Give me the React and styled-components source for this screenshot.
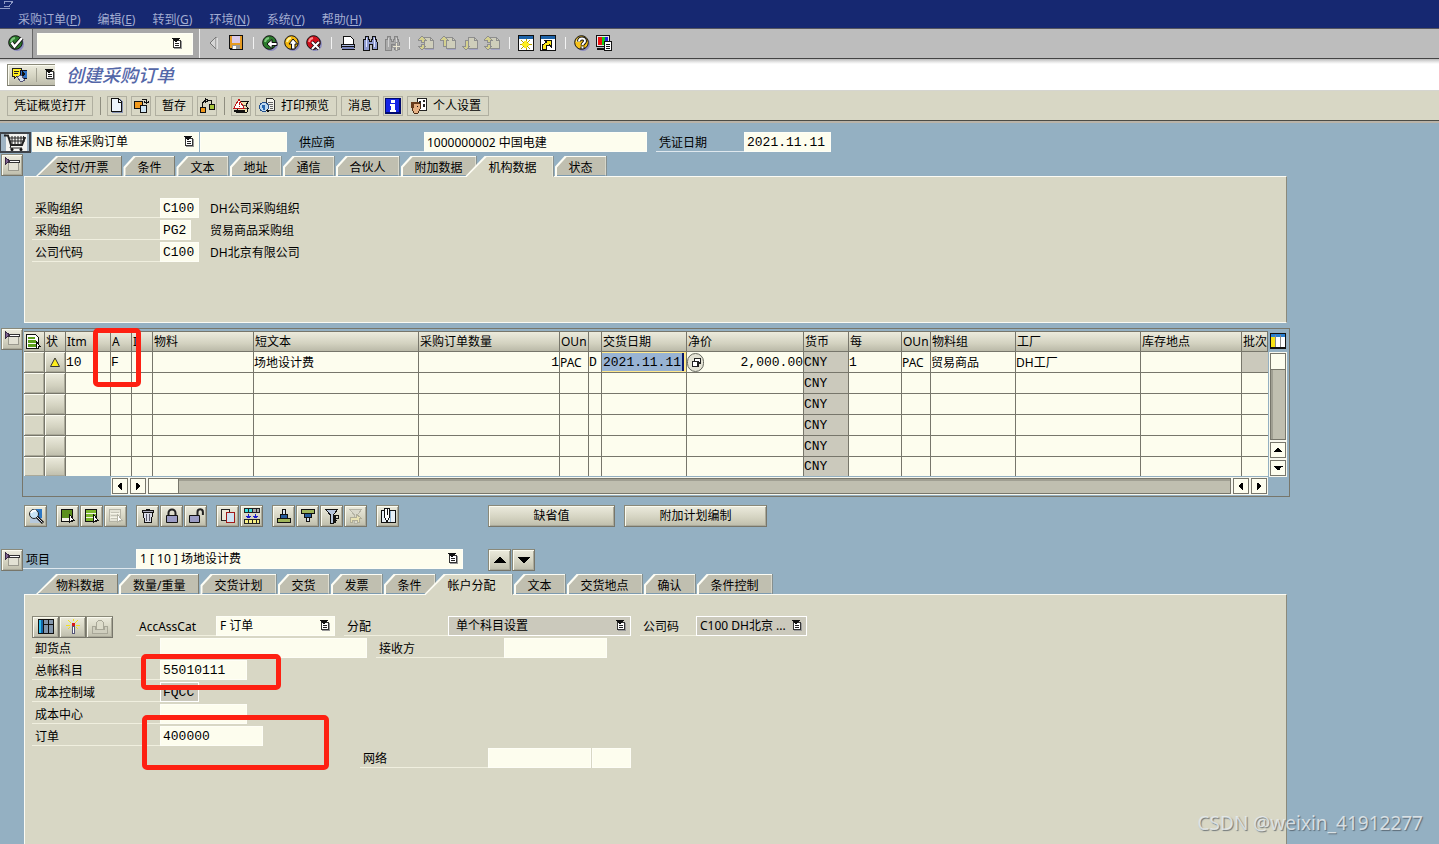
import React, { useState } from "react";
import styled, { createGlobalStyle, css } from "styled-components";

const sans = '"Noto Sans", "Noto Sans CJK SC", sans-serif';
const mono = '"Liberation Mono", "Noto Sans CJK SC", monospace';

const colors = {
  navy: "#162871",
  body: "#94b0c2",
  panel: "#d8d7c5",
  tab: "#c0bfb0",
  field: "#fdfdee",
  disabled: "#cbc9bc",
  line: "#77766b",
};

const GlobalStyle = createGlobalStyle`
  * {
    box-sizing: border-box;
  }
  body {
    margin: 0;
    font-family: ${sans};
    font-size: 12px;
    line-height: 16px;
    color: #000;
    background: ${colors.body};
  }
  button, input, select {
    font: inherit;
    color: inherit;
    margin: 0;
    border-radius: 0;
    outline: none;
  }
  button {
    cursor: pointer;
  }
  svg {
    display: block;
    flex: none;
  }
`;

/* ---------- icons ---------- */

const Icon = ({ size = 16, children }) => (
  <svg width={size} height={size} viewBox="0 0 16 16" fill="none" shapeRendering="crispEdges" aria-hidden="true">
    {children}
  </svg>
);

const Ball = ({ fill, hi, children }) => (
  <svg width="16" height="16" viewBox="0 0 16 16" fill="none" aria-hidden="true">
    <circle cx="9" cy="9" r="7" fill="#8c8cc0" />
    <circle cx="7.5" cy="7.5" r="6.8" fill={fill} stroke="#111" />
    <path d="M3 7a5 5 0 0 1 4-4" stroke={hi} strokeWidth="2" />
    {children}
  </svg>
);

const OkIcon = () => (
  <Ball fill="#2b7a2b" hi="#7cc47c">
    <path d="M3.5 7.5l3 4L14 3" stroke="#111" strokeWidth="4" />
    <path d="M3.5 7.5l3 4L14 3" stroke="#fff" strokeWidth="2.4" />
  </Ball>
);
const BackIcon = () => (
  <Ball fill="#2b7a2b" hi="#7cc47c">
    <path d="M5 9l5-4.5V7.500h5v3h-5v3z" fill="#fff" stroke="#111" />
  </Ball>
);
const ExitIcon = () => (
  <Ball fill="#f2b50c" hi="#fff29a">
    <path d="M9 4l4.500 5H11v5H7.500V9H5z" fill="#fff" stroke="#111" />
  </Ball>
);
const CancelIcon = () => (
  <Ball fill="#d0101c" hi="#ff8d8d">
    <path d="M6 7l7 7M13 7l-7 7" stroke="#111" strokeWidth="3.500" />
    <path d="M6 7l7 7M13 7l-7 7" stroke="#fff" strokeWidth="2" />
  </Ball>
);
const HelpIcon = () => (
  <Ball fill="#f7c21a" hi="#fff6a8">
    <path d="M5 6.500c0-4 6-4 6-.5 0 2-2.500 2-2.500 4.500M8.500 11.500v2.500" stroke="#111" strokeWidth="4" />
    <path d="M5 6.500c0-4 6-4 6-.5 0 2-2.500 2-2.500 4M8.500 11.500v2" stroke="#fff" strokeWidth="2" />
  </Ball>
);
const LeftIcon = () => (
  <svg width="14" height="14" viewBox="0 0 14 14" fill="none" aria-hidden="true">
    <path d="M8 1v12L2 7z" fill="#d5d5d5" stroke="#777" />
    <path d="M9 2v11" stroke="#fff" />
  </svg>
);
const SaveIcon = () => (
  <Icon>
    <path d="M1 0h14v15H2l-1-1z" fill="#111" />
    <path d="M2 1h2v12H2zM12 1h2v13h-2z" fill="#e59a22" />
    <path d="M4 8h8v2H4z" fill="#e59a22" />
    <path d="M4 1h8v7H4z" fill="#d9c9e8" />
    <path d="M4 10h8v4H4z" fill="#999" />
    <path d="M5 11h3v3H5z" fill="#fff" />
  </Icon>
);
const PrintIcon = () => (
  <Icon>
    <path d="M3 1h7l3 3v6H3z" fill="#fff" stroke="#111" />
    <path d="M1 9h14v4H1z" fill="#111" />
    <path d="M2 10h12v1H2z" fill="#a9b6e0" />
    <path d="M2 12h12v2H2z" fill="#7a86bd" />
    <path d="M2 14h13v1H2z" fill="#111" />
  </Icon>
);
const FindIcon = ({ off, more }) => (
  <Icon>
    <path
      d="M3 1h3v3h1v2h2V4h1V1h3v3h1l1 3v7h-5V9H7v6H1V7l1-3h1z"
      fill={off ? "#a9a9a9" : "#8f9bd0"}
      stroke={off ? "#858585" : "#111"}
    />
    <path d="M4 3v9M12 3v9" stroke={off ? "#d2d2d2" : "#dfe5ff"} />
    {more && <path d="M11 7h2v3h3v2h-3v3h-2v-3H8v-2h3z" fill="#e8e4d0" stroke="#999" />}
  </Icon>
);
const PageMoveIcon = ({ up, down }) => (
  <Icon>
    <path d="M6 2h6l3 3v8H6z" fill="#cfcebb" stroke="#8e8e8e" />
    <path d="M12 2v3h3" stroke="#8e8e8e" />
    <path d="M7 14h9V6" stroke="#a4a4c4" />
    {up && !down && <path d="M4 1l4 4H6v6H3V5H0z" fill="#d4d08e" stroke="#8e8e8e" />}
    {down && !up && <path d="M4 15l4-4H6V5H3v6H0z" fill="#d4d08e" stroke="#8e8e8e" />}
    {up && down && (
      <path d="M4 1l4 4H6v2H3V5H0zM4 15l4-4H6V9H3v2H0z" fill="#d4d08e" stroke="#8e8e8e" />
    )}
  </Icon>
);
const SessionIcon = ({ shortcut }) => (
  <Icon>
    <path d="M0 0h16v16H0z" fill="#111" />
    <path d="M1 1h14v3H1z" fill="#1d63a8" />
    <path d="M1 4h14v11H1z" fill="#fff" />
    {shortcut ? (
      <path d="M2.500 14v-4l4-3-2-2h7v7l-2-2-3 1v3z" fill="#ffea1c" stroke="#111" />
    ) : (
      <>
        <path d="M3 5l9 9M12 5l-9 9M8 4v11M2 9.500h12" stroke="#b8a000" />
        <path d="M4 8h7v3H4zM6 6h3v7H6z" fill="#ffee1c" />
      </>
    )}
  </Icon>
);
const LayoutIcon = () => (
  <Icon>
    <path d="M0.500 0.500h13v11h-13z" fill="#e8e8e8" stroke="#111" />
    <path d="M2 2h4v8H2z" fill="#e11" />
    <path d="M6 2h3v8H6z" fill="#1c1" />
    <path d="M9 2h3v4H9z" fill="#22d" />
    <path d="M1 14h8" stroke="#111" strokeWidth="2" />
    <path d="M8.500 6.500h7v9h-7z" fill="#fff" stroke="#111" />
    <path d="M10 9h4M10 11h4M10 13h4" stroke="#111" />
  </Icon>
);
const DropIcon = () => (
  <svg width="10" height="12" viewBox="0 0 10 12" fill="none" shapeRendering="crispEdges" aria-hidden="true">
    <path d="M2 3h8v8H2z" fill="#999" />
    <path d="M1 2h8v8H1z" fill="#333" />
    <path d="M2 3h6v6H2z" fill="#fff" />
    <path d="M3 5h4v1H3zM3 7h4v1H3z" fill="#222" />
    <path d="M0 0h8v1H7v1H6v1H5v1H3V3H2V2H1V1H0z" fill="#111" />
  </svg>
);
const ServicesIcon = () => (
  <Icon>
    <path d="M1 1h9v8H6l-3 3V9H1z" fill="#ffee22" stroke="#222" />
    <path d="M3 4h5M3 6h4" stroke="#222" />
    <path d="M9 3h7v8H9z" fill="#2c6fc4" stroke="#112" />
    <path d="M11 4l3 3-3 3z" fill="#111" />
    <path d="M6 10l4-2 4 5-4 2z" fill="#d8e2f0" stroke="#557" />
  </Icon>
);
const NewIcon = () => (
  <Icon>
    <path d="M3 1h8l3 3v11H3z" fill="#8793b4" />
    <path d="M2.500 0.500h7l3 3v10h-10z" fill="#edf4fb" stroke="#111" />
    <path d="M9.500 1v3h3" stroke="#111" />
  </Icon>
);
const OtherDocIcon = () => (
  <Icon>
    <path d="M1.500 3.500h8v7h-8z" fill="#f29a1d" stroke="#111" />
    <path d="M7.500 7.500h6v7h-6z" fill="#cfe6f5" stroke="#111" />
    <path d="M9 1.500h4.500V5M11 3.500l2.500 2L16 3.500" stroke="#111" />
  </Icon>
);
const RelationIcon = () => (
  <Icon>
    <path d="M1.500 9.500h5v5h-5z" fill="#f29a1d" stroke="#111" />
    <path d="M10.500 6.500h5v5h-5z" fill="#a7c63c" stroke="#111" />
    <path d="M3.500 9V5l3-3M8 2.500h4.500V6M6 0l3 2.500L6 5z" stroke="#111" />
  </Icon>
);
const CheckDocIcon = () => (
  <Icon>
    <path d="M5 3.500h10l-2 4 2 3-1 4H4z" fill="#efe3b0" stroke="#111" />
    <path d="M10 7h3M11 10h3" stroke="#555" />
    <path d="M6 1l5 9H1z" fill="#fff" stroke="#c01818" />
    <path d="M6 4v3M6 8v1" stroke="#c01818" />
    <path d="M1 13h11" stroke="#111" strokeWidth="2" />
  </Icon>
);
const PreviewIcon = () => (
  <Icon>
    <path d="M7.500 0.500h6l2 2v10h-8z" fill="#f4f4ee" stroke="#333" />
    <path d="M9 4.500h5M9 6.500h5M11 8.500h3M11 10.500h3" stroke="#666" />
    <circle cx="5" cy="9" r="4.500" fill="#bcd8ef" stroke="#23508c" />
    <path d="M3 7h3v5H4" fill="#2667b0" />
    <path d="M8 12l2 2" stroke="#111" strokeWidth="2" />
  </Icon>
);
const InfoIcon = () => (
  <Icon>
    <path d="M0 0h16v16H0z" fill="#000a6e" />
    <path d="M1 1h13v13H1z" fill="#1524e6" />
    <path d="M6 2h4v3H6zM5 6h5v6h1v2H5v-2h1V8H5z" fill="#fff" />
  </Icon>
);
const PersonIcon = () => (
  <Icon>
    <path d="M6.500 0.500h9v12h-9z" fill="#fff" stroke="#222" />
    <path d="M8 3h2v2H8zM12 2h2v2h-2zM12 6h2v3h-2z" fill="#222" />
    <path d="M1 5h8v6l-2 4H3l-2-4z" fill="#e6b183" stroke="#4b2a12" />
    <path d="M0 4h8v2H3v4H0z" fill="#6a3d1c" />
    <path d="M6 8h1v1H6z" fill="#111" />
  </Icon>
);
const CartIcon = () => (
  <svg width="24" height="17" viewBox="0 0 24 17" fill="none" aria-hidden="true">
    <path d="M3 0h21v17H3z" fill="#f3f3f0" />
    <path d="M1 1.500h4l3 9.500h11l3-8" stroke="#222" strokeWidth="2" />
    <path d="M6 4h17M7 7h15M9 2v9M12 2v9M15 2v9M18 2v9M20.500 2v7M8 11l-1 3h12" stroke="#222" />
    <circle cx="9" cy="15.500" r="1.500" fill="#111" />
    <circle cx="18" cy="15.500" r="1.500" fill="#111" />
  </svg>
);
const CollapseIcon = () => (
  <Icon>
    <path d="M4.500 4.500h10v9h-10z" fill="#e3e2d4" stroke="#9b9a8f" />
    <path d="M5 3.500h10v2H5z" fill="#fff" stroke="#333" />
    <path d="M1 0.500l5 3.500-5 3.500z" fill="#7d6290" stroke="#3a2a44" />
  </Icon>
);
const triangles = {
  up: "M7 5h2v1h1v1h1v1h1v1h1v1h1v1H2v-1h1V9h1V8h1V7h1V6h1z",
  down: "M2 5h12v1h-1v1h-1v1h-1v1h-1v1H9v1H7v-1H6V9H5V8H4V7H3V6H2z",
  left: "M10 4v8H9v-1H8v-1H7V9H6V7h1V6h1V5h1V4z",
  right: "M6 4v8h1v-1h1v-1h1V9h1V7H9V6H8V5H7V4z",
};
const TriIcon = ({ dir, size = 16 }) => (
  <Icon size={size}>
    <path d={triangles[dir]} fill="#000" />
  </Icon>
);
const WarnIcon = () => (
  <svg width="12" height="11" viewBox="0 0 12 11" aria-hidden="true">
    <path d="M6 1l4.500 8.500h-9z" fill="#ffee1c" stroke="#333" />
  </svg>
);
const SelectAllIcon = () => (
  <Icon>
    <path d="M1.500 0.500h9l3 3v11h-12z" fill="#fff" stroke="#111" />
    <path d="M3 3h7v2H3zM3 6h8v3H3zM3 10h8v3H3z" fill="#5b9e1c" />
    <path d="M11 7l4 5h-2v2h-2z" fill="#fff" stroke="#111" />
  </Icon>
);
const ColumnsIcon = () => (
  <Icon>
    <path d="M0 0h16v16H0z" fill="#111" />
    <path d="M1 1h14v13H1z" fill="#fff" />
    <path d="M1 1h14v3H1z" fill="#2a7fd0" />
    <path d="M1 4h4v10H1z" fill="#f9e414" />
    <path d="M5.500 2v12M10.500 2v12" stroke="#888" />
  </Icon>
);
const DetailIcon = () => (
  <svg width="18" height="18" viewBox="0 0 18 18" fill="none" aria-hidden="true">
    <path d="M5 2h10v13H5z" fill="#2c77c4" />
    <path d="M3 11h12v5H3z" fill="#b7c9dc" />
    <circle cx="7" cy="7" r="4.500" fill="#c8e3f6" stroke="#222" />
    <path d="M4 6c1-2 3-3 5-2" stroke="#fff" strokeWidth="2" />
    <path d="M10 10l6 6" stroke="#111" strokeWidth="3" />
    <path d="M10 10l5.500 5.500" stroke="#d8d8e6" />
  </svg>
);
const ListIcon = ({ fill, striped, off }) => (
  <Icon>
    <path d="M1.500 1.500h11v12h-11z" fill="#f5f4e8" stroke={off ? "#b5b4a6" : "#111"} />
    <path d={striped ? "M2 2h10v3H2zM2 6h10v3H2zM2 10h10v3H2z" : "M2 2h10v8H2z"} fill={fill} />
    {striped && off && <path d="M3 4.500h8M3 7.500h8M3 10.500h6" stroke="#c4c3b6" />}
    <path d="M9.500 6.500l5 6h-2l-3 1.500z" fill="#fff" stroke={off ? "#b5b4a6" : "#111"} />
  </Icon>
);
const TrashIcon = () => (
  <Icon>
    <path d="M3.500 4.500h9l-1 10h-7z" fill="#d9dce8" stroke="#111" />
    <path d="M6.500 6v7M9.500 6v7" stroke="#556" />
    <path d="M2.500 2.500h11v2h-11zM6 1.500h4" fill="#aab" stroke="#111" />
  </Icon>
);
const LockIcon = ({ open }) => (
  <svg width="16" height="16" viewBox="0 0 16 16" fill="none" aria-hidden="true">
    <path
      d={open ? "M9.500 8V4a2.700 2.700 0 0 1 5.400 0v3" : "M4.500 8V5a3.500 3.500 0 0 1 7 0v3"}
      stroke="#222"
      strokeWidth="2"
    />
    <path d={open ? "M1.500 7.500h10v7h-10z" : "M2.500 7.500h11v7h-11z"} fill="#9b9cc4" stroke="#111" />
  </svg>
);
const CopyIcon = () => (
  <Icon>
    <path d="M1.500 1.500h8v11h-8z" fill="#ece9da" stroke="#222" />
    <path d="M6.500 4.500h8v10h-8z" fill="#cfe2f2" stroke="#a01818" />
  </Icon>
);
const SplitIcon = () => (
  <Icon>
    <path d="M0 0h16v5H0zM0 11h16v5H0z" fill="#222" />
    <path d="M1 1h3v3H1zM5 1h3v3H5z" fill="#38e0e0" />
    <path d="M9 1h3v3H9zM13 1h2v3h-2z" fill="#aaa" />
    <path d="M1 12h3v3H1zM5 12h3v3H5zM9 12h3v3H9zM13 12h2v3h-2z" fill="#f7ef86" />
    <path d="M4 6h1v2h2v1H6v1H3V9H2V8h2zM11 6h1v2h2v1h-1v1h-3V9H9V8h2z" fill="#1a1ad0" />
  </Icon>
);
const SortIcon = ({ down }) => (
  <Icon>
    {down ? (
      <>
        <path d="M1.500 1.500h13v4h-13z" fill="#9fb55a" stroke="#111" />
        <path d="M4.500 5.500h7v4h-7z" fill="#245a9a" stroke="#111" />
        <path d="M6.500 9.500h3v4h-3z" fill="#d8e2f0" stroke="#111" />
      </>
    ) : (
      <>
        <path d="M6.500 1.500h3v5h-3z" fill="#d8e2f0" stroke="#111" />
        <path d="M4.500 6.500h7v4h-7z" fill="#245a9a" stroke="#111" />
        <path d="M1.500 10.500h13v4h-13z" fill="#9fb55a" stroke="#111" />
      </>
    )}
  </Icon>
);
const FilterIcon = ({ off }) => (
  <Icon>
    <path
      d="M1.500 1.500h12L9.500 7v8h-3V7z"
      fill={off ? "#d9d8cb" : "#b7c6dc"}
      stroke={off ? "#b5b4a6" : "#111"}
    />
    {off ? (
      <path d="M2 14V9h6V6l5 4h-2v4H9v-2H4v2z" fill="#e8e2b4" stroke="#b0ad98" />
    ) : (
      <path d="M12 7h2v3h-3v2h2M10 7h1v7h-1z" stroke="#111" />
    )}
  </Icon>
);
const AttachIcon = () => (
  <Icon>
    <path d="M1.500 2.500h14v12h-14z" fill="#e9f0f6" stroke="#111" />
    <path d="M10 3v11" stroke="#8fb0cc" />
    <path d="M4.500 0.500h5v9l-2.500 4-2.500-4z" fill="#fff" stroke="#111" />
    <path d="M7 1v6" stroke="#111" />
  </Icon>
);
const GridIcon = () => (
  <Icon>
    <path d="M0 0h16v15H0z" fill="#111" />
    <path d="M1 1h4v13H1z" fill="#2ec0ef" />
    <path d="M3 1h2v13H3z" fill="#1464a8" />
    <path d="M6 1h4v4H6zM11 1h4v4h-4zM6 6h4v8H6zM11 6h4v8h-4z" fill="#8296ac" />
  </Icon>
);
const WandIcon = () => (
  <Icon>
    <path d="M3 1l3 3M13 1l-3 3M1 6h4M11 6h4M3 10l2-2M13 10l-2-2M8 0v2" stroke="#f2e21c" />
    <path d="M7 4h3v3H7z" fill="#d81818" />
    <path d="M7.500 7.500h2v7h-2z" fill="#fff" stroke="#557" />
  </Icon>
);
const StampIcon = () => (
  <svg width="18" height="16" viewBox="0 0 18 16" fill="none" shapeRendering="crispEdges" aria-hidden="true">
    <path d="M5.500 10V4l2-3h3l2 3v6" fill="#dddccb" stroke="#a8a798" />
    <path d="M1.500 7.500h3v3h9v-3h3v7h-15z" fill="#cfcebe" stroke="#a8a798" />
  </svg>
);
const MatchIcon = () => (
  <Icon size={10}>
    <path d="M6 1h9v7H6z" fill="#fff" stroke="#222" strokeWidth="2" />
    <path d="M2 6h9v7H2z" fill="#fff" stroke="#222" strokeWidth="2" />
  </Icon>
);
const WindowGlyph = () => (
  <svg width="16" height="10" viewBox="0 0 16 10" fill="none" shapeRendering="crispEdges" aria-hidden="true">
    <path d="M5 1.500h8M4.500 1v3M12.500 2l-3 4H4M0 8.500h10" stroke="#8e9ac6" />
  </svg>
);

/* ---------- layout ---------- */

const Page = styled.div`
  min-height: 100vh;
  display: flex;
  flex-direction: column;
  overflow: hidden;
  position: relative;
`;

const MenuBar = styled.nav`
  position: relative;
  height: 28px;
  padding: 11px 18px 0;
  display: flex;
  gap: 17px;
  background: ${colors.navy};
  svg {
    position: absolute;
    left: 0;
    top: 0;
  }
`;

const MenuItem = styled.button`
  border: 0;
  padding: 0;
  background: none;
  color: #a3add2;
  height: 17px;
  line-height: 17px;
  white-space: nowrap;
`;

const SystemBar = styled.div`
  display: flex;
  align-items: stretch;
  height: 31px;
  background: #bdbdbd;
  border-top: 1px solid #54555f;
  border-bottom: 1px solid #444;
`;

const OkZone = styled.div`
  width: 33px;
  padding: 0 0 2px 8px;
  display: flex;
  align-items: center;
  border-right: 1px solid #666;
`;

const CommandZone = styled.div`
  display: flex;
  align-items: center;
  padding: 0 6px 0 4px;
  background: #a8a8a8;
  border-right: 1px solid #eee;
`;

const IconRow = styled.div`
  display: flex;
  align-items: center;
  gap: 6px;
  padding: 0 0 2px 8px;
`;

const IconButton = styled.button`
  border: 0;
  padding: 0;
  background: none;
  display: flex;
`;

const Divider = styled.span`
  width: 6px;
  height: ${(props) => props.$tall || 12}px;
  flex: none;
  background: linear-gradient(to right, transparent 3px, ${(props) => props.$color || "#f2f2f2"} 3px, ${(props) =>
    props.$color || "#f2f2f2"} 4px, transparent 4px);
`;

const TitleBar = styled.header`
  display: flex;
  align-items: center;
  gap: 11px;
  height: 32px;
  padding: 0 7px;
  background: linear-gradient(to bottom, #bbb 0, #e8e8e8 3px, #fff 5px);
  border-bottom: 1px solid #d5d5d0;
`;

const raised = css`
  border: 1px solid;
  border-color: #8a8979 #77766b #77766b #8a8979;
  box-shadow: inset 1px 1px 0 #fbfbf0, inset -1px -1px 0 #aaa999;
  background: linear-gradient(to bottom, #ecebdd, #d3d2c0 60%, #bebdac);
`;

const ServiceButton = styled.button`
  ${raised}
  border-right: 0;
  width: 48px;
  height: 22px;
  padding: 0 0 0 3px;
  display: flex;
  align-items: center;
  justify-content: space-between;
  box-shadow: inset 1px 1px 0 #fbfbf0;
`;

const Title = styled.h1`
  margin: 0;
  font-size: 18px;
  line-height: 24px;
  font-style: italic;
  font-weight: 500;
  color: #5467a8;
`;

const AppBar = styled.div`
  display: flex;
  align-items: center;
  gap: 4px;
  height: 30px;
  padding: 0 7px;
  background: ${colors.panel};
  border-bottom: 1px solid #4c4c46;
  box-shadow: 0 2px 0 #b9b3a8;
`;

const AppButton = styled.button`
  height: 20px;
  padding: ${(props) => (props.$icon ? "0 7px 0 3px" : "0 6px")};
  border: 1px solid #b0afa0;
  background: ${colors.panel};
  display: flex;
  align-items: center;
  gap: 6px;
  line-height: 20px;
  white-space: nowrap;
`;

const AppIconButton = styled(AppButton)`
  width: 20px;
  padding: 0;
  justify-content: center;
`;

const Content = styled.main`
  flex: 1;
  display: flex;
  flex-direction: column;
  padding: 11px 150px 0 0;
`;

const Row = styled.div`
  display: flex;
  align-items: flex-start;
  gap: ${(props) => props.$gap || 0}px;
  height: ${(props) => props.$height || 22}px;
  padding-left: ${(props) => props.$indent || 0}px;
`;

const Pair = styled.div`
  display: flex;
  gap: ${(props) => props.$gap || 0}px;
  min-width: ${(props) => props.$min || 0}px;
  height: 20px;
`;

const Label = styled.label`
  width: ${(props) => props.$w}px;
  height: 20px;
  padding-left: 3px;
  line-height: 22px;
  border-bottom: 1px solid ${(props) => (props.$light ? "#dfe8ee" : "#f0efdf")};
  white-space: nowrap;
`;

const Field = styled.input`
  width: ${(props) => props.$w}px;
  height: 20px;
  padding: 0 2px;
  border: 1px solid ${(props) => (props.$off ? "#fff" : "#fefef6")};
  background: ${(props) => (props.$off ? colors.disabled : colors.field)};
  font-family: ${(props) => (props.$sans ? sans : mono)};
  font-size: ${(props) => (props.$sans ? 12 : 13)}px;
`;

const SelectBox = styled.span`
  position: relative;
  width: ${(props) => props.$w}px;
  height: ${(props) => props.$h || 20}px;
  svg {
    position: absolute;
    right: ${(props) => props.$inset || 5}px;
    top: 50%;
    margin-top: -6px;
    pointer-events: none;
  }
  input, select {
    appearance: none;
    width: 100%;
    height: 100%;
    padding: 0 18px 0 ${(props) => props.$pad || 3}px;
    border: 1px solid ${(props) => (props.$off ? "#fff" : "#fefef6")};
    background: ${(props) => (props.$off ? colors.disabled : colors.field)};
    text-overflow: ellipsis;
  }
`;

const Value = styled.span`
  line-height: 22px;
  padding-left: 11px;
`;

const CartButton = styled.button`
  width: 31px;
  height: 21px;
  padding: 0;
  border: 2px solid #3f444a;
  border-left-width: 1px;
  background: #9fb4c4;
  display: flex;
  align-items: center;
  justify-content: center;
`;

const Section = styled.section`
  position: relative;
  display: grid;
  grid-template-columns: 22px 1fr;
  margin-top: ${(props) => props.$gap || 0}px;
  ${(props) => props.$grow && "flex: 1;"}
`;

const SquareButton = styled.button`
  ${raised}
  width: ${(props) => props.$w || 23}px;
  height: 22px;
  padding: 0;
  display: flex;
  align-items: center;
  justify-content: center;
`;

const CollapseButton = styled(SquareButton)`
  width: 22px;
  margin-left: 1px;
`;

const TextButton = styled(SquareButton)`
  line-height: 22px;
`;

const Stack = styled.div`
  display: flex;
  flex-direction: column;
  padding: ${(props) => props.$top || 0}px 2px 0 2px;
`;

const Tabs = styled.div`
  display: flex;
  gap: 1px;
  padding-left: 12px;
  height: 20px;
`;

const tabShape = (wide) =>
  wide
    ? "polygon(0 100%, 20px 0, 100% 0, 100% 100%)"
    : "polygon(0 100%, 0 11px, 10px 0, 100% 0, 100% 100%)";

const Tab = styled.button`
  position: relative;
  isolation: isolate;
  border: 0;
  height: ${(props) => (props.$active ? 21 : 20)}px;
  padding: ${(props) => (props.$active ? "0 17px 0 24px" : props.$wide ? "0 14px 0 20px" : "0 14px")};
  margin-left: ${(props) => (props.$active ? "-13px" : 0)};
  z-index: ${(props) => (props.$active ? 1 : 0)};
  line-height: 24px;
  white-space: nowrap;
  background: linear-gradient(to left, #7d7c70 1px, #fdfdf4 1px);
  clip-path: ${(props) => tabShape(props.$active || props.$wide)};
  &::before {
    content: "";
    position: absolute;
    z-index: -1;
    inset: 1px 1px 0 2px;
    background: ${(props) => (props.$active ? colors.panel : colors.tab)};
    border-bottom: ${(props) => (props.$active ? "0" : "1px solid #7d9bb0")};
    clip-path: ${(props) => tabShape(props.$active || props.$wide)};
  }
`;

const Panel = styled.div`
  position: relative;
  flex: 1;
  border: 1px solid #fbfbf4;
  border-right-color: #8b8a7c;
  ${(props) => props.$open && "border-bottom: 0;"}
  background: ${colors.panel};
  padding: ${(props) => props.$pad};
`;

const ItemToolbar = styled.div`
  display: flex;
  gap: 9px;
  padding: 8px 0 22px 24px;
`;

const ButtonGroup = styled.div`
  display: flex;
  gap: ${(props) => props.$gap ?? 1}px;
  margin-left: ${(props) => props.$push || 0}px;
`;

/* ---------- item table ---------- */

const TableFrame = styled.div`
  border: 1px solid ${colors.line};
  padding: 2px 2px 2px 1px;
`;

const TableBody = styled.div`
  display: grid;
  grid-template-columns: 1fr 18px;
  gap: 1px;
`;

const ItemTable = styled.table`
  width: 100%;
  table-layout: fixed;
  border-collapse: separate;
  border-spacing: 0;
  th, td {
    padding: 0;
    overflow: hidden;
    border-right: 1px solid ${colors.line};
    border-bottom: 1px solid ${colors.line};
  }
  th {
    height: 21px;
    padding-left: 1px;
    font-weight: 400;
    text-align: left;
    white-space: nowrap;
    line-height: 18px;
    border-top: 1px solid ${colors.line};
    background: linear-gradient(to bottom, #ecebdd, #d3d2c0 60%, #bab9a8);
  }
  td {
    height: 21px;
    background: ${colors.field};
  }
  tr:last-child td {
    height: 19px;
    border-bottom: 0;
  }
  td:last-child {
    border-right: 0;
  }
`;

const Cell = styled.input`
  display: block;
  width: 100%;
  height: ${(props) => (props.$last ? 19 : 20)}px;
  padding: 0;
  border: 0;
  background: ${(props) => (props.$off ? colors.disabled : "transparent")};
  text-align: ${(props) => (props.$right ? "right" : "left")};
  font-family: ${(props) => (props.$sans ? sans : mono)};
  font-size: ${(props) => (props.$sans ? 12 : 13)}px;
  ${(props) =>
    props.$focus &&
    css`
      padding-left: 1px;
      background: #98b3d3;
      border: 1px solid #ffe98c;
      border-left: 0;
      border-right-width: 2px;
      box-shadow: inset -2px 0 0 #0b1a6c;
    `}
`;

const RowHandle = styled.button`
  ${raised}
  display: flex;
  align-items: center;
  justify-content: center;
  width: 100%;
  height: ${(props) => (props.$last ? 19 : 20)}px;
  padding: 0;
  border: 0;
  ${(props) => props.$plain && `background: ${colors.panel};`}
`;

const HelpCell = styled.span`
  position: relative;
  display: block;
`;

const MatchButton = styled.button`
  position: absolute;
  left: 0;
  top: 1px;
  width: 17px;
  height: 19px;
  padding: 0;
  border: 1px solid #66685e;
  border-radius: 9px;
  background: #e4e3d5;
  display: flex;
  align-items: center;
  justify-content: center;
`;

const Scroller = styled.div`
  display: flex;
  flex-direction: ${(props) => (props.$vertical ? "column" : "row")};
  gap: 2px;
  ${(props) => (props.$vertical ? "align-items: center;" : "padding: 2px 20px 0 88px;")}
`;

const ArrowButton = styled.button`
  width: 16px;
  height: 16px;
  flex: none;
  padding: 0;
  border: 1px solid ${colors.line};
  outline: 1px solid #f8f8ee;
  background: ${colors.field};
  display: flex;
  align-items: center;
  justify-content: center;
`;

const Track = styled.div`
  flex: 1;
  display: flex;
  ${(props) => props.$vertical && "width: 16px;"}
  border: 1px solid ${colors.line};
  outline: 1px solid #f8f8ee;
  background: ${colors.tab};
  box-shadow: inset 2px 2px 0 #a09f92;
  flex-direction: ${(props) => (props.$vertical ? "column" : "row")};
`;

const Thumb = styled.div`
  flex: 0 0 ${(props) => props.$size}px;
  background: ${colors.field};
  border: solid ${colors.line};
  border-width: ${(props) => (props.$vertical ? "0 0 1px" : "0 1px 0 0")};
`;

const ConfigButton = styled(IconButton)`
  height: 20px;
  align-items: center;
`;

const Mark = styled.div`
  position: absolute;
  left: ${(props) => props.$x}px;
  top: ${(props) => props.$y}px;
  width: ${(props) => props.$w}px;
  height: ${(props) => props.$h}px;
  border: 5px solid #fe2012;
  border-radius: 5px;
  pointer-events: none;
  z-index: 3;
`;

const Watermark = styled.div`
  position: absolute;
  right: 16px;
  bottom: 8px;
  font-size: 19px;
  line-height: 26px;
  color: rgba(232, 236, 238, 0.85);
  text-shadow: 1px 1px 1px rgba(70, 80, 90, 0.7);
`;

/* ---------- data ---------- */

const menus = [
  ["采购订单", "P"],
  ["编辑", "E"],
  ["转到", "G"],
  ["环境", "N"],
  ["系统", "Y"],
  ["帮助", "H"],
];

const headerTabs = ["交付/开票", "条件", "文本", "地址", "通信", "合伙人", "附加数据", "机构数据", "状态"];
const itemTabs = [
  "物料数据",
  "数量/重量",
  "交货计划",
  "交货",
  "发票",
  "条件",
  "帐户分配",
  "文本",
  "交货地点",
  "确认",
  "条件控制",
];

const orgData = [
  ["采购组织", "C100", 39, "DH公司采购组织"],
  ["采购组", "PG2", 31, "贸易商品采购组"],
  ["公司代码", "C100", 39, "DH北京有限公司"],
];

const columns = [
  { key: "itm", title: "Itm", w: 45 },
  { key: "acct", title: "A", w: 21 },
  { key: "category", title: "I", w: 21 },
  { key: "material", title: "物料", w: 101 },
  { key: "text", title: "短文本", w: 165, sans: true },
  { key: "qty", title: "采购订单数量", w: 141, right: true },
  { key: "oun", title: "OUn", w: 29, sans: true },
  { key: "dateType", title: "", w: 13 },
  { key: "date", title: "交货日期", w: 85 },
  { key: "price", title: "净价", w: 117, right: true },
  { key: "currency", title: "货币", w: 45, off: true },
  { key: "per", title: "每", w: 53 },
  { key: "opu", title: "OUn", w: 29, sans: true },
  { key: "group", title: "物料组", w: 85, sans: true },
  { key: "plant", title: "工厂", w: 125, sans: true },
  { key: "sloc", title: "库存地点", w: 101 },
  { key: "batch", title: "批次", w: 26 },
];

const items = [
  {
    itm: "10",
    acct: "F",
    text: "场地设计费",
    qty: "1",
    oun: "PAC",
    dateType: "D",
    date: "2021.11.11",
    price: "2,000.00",
    currency: "CNY",
    per: "1",
    opu: "PAC",
    group: "贸易商品",
    plant: "DH工厂",
  },
  ...Array.from({ length: 5 }, () => ({ currency: "CNY" })),
];

const toolGroups = [
  [["明细", <DetailIcon />]],
  [
    ["全选", <ListIcon fill="#5b8f1c" />],
    ["选择块", <ListIcon fill="#7cb52c" striped />],
    ["取消选择", <ListIcon fill="#e4e3d6" striped off />],
  ],
  [
    ["删除", <TrashIcon />],
    ["锁定", <LockIcon />],
    ["解锁", <LockIcon open />],
  ],
  [
    ["复制", <CopyIcon />],
    ["拆分", <SplitIcon />],
  ],
  [
    ["升序", <SortIcon />],
    ["降序", <SortIcon down />],
    ["过滤", <FilterIcon />],
    ["取消过滤", <FilterIcon off />],
  ],
  [["附件", <AttachIcon />]],
];

/* ---------- components ---------- */

const TabStrip = ({ tabs, active, onChange }) => (
  <Tabs role="tablist">
    {tabs.map((name, i) => (
      <Tab
        key={name}
        role="tab"
        aria-selected={i === active}
        $active={i === active}
        $wide={i === 0}
        onClick={() => onChange(i)}
      >
        {name}
      </Tab>
    ))}
  </Tabs>
);

const Select = ({ id, value, w, off, label, pad }) => (
  <SelectBox $w={w} $off={off} $pad={pad}>
    <select id={id} aria-label={label} defaultValue={value}>
      <option>{value}</option>
    </select>
    <DropIcon />
  </SelectBox>
);

const LabeledField = ({ id, label, labelWidth = 128, value = "", w, off, light, useSans, min }) => (
  <Pair $min={min}>
    <Label htmlFor={id} $w={labelWidth} $light={light}>
      {label}
    </Label>
    <Field id={id} defaultValue={value} $w={w} $off={off} $sans={useSans} />
  </Pair>
);

const LabeledSelect = ({ id, label, labelWidth, value, w, off, pad }) => (
  <Pair>
    <Label htmlFor={id} $w={labelWidth}>
      {label}
    </Label>
    <Select id={id} value={value} w={w} off={off} pad={pad} />
  </Pair>
);

const SystemToolbar = () => (
  <SystemBar>
    <OkZone>
      <IconButton aria-label="确认"><OkIcon /></IconButton>
    </OkZone>
    <CommandZone>
      <SelectBox $w={156} $h={22} $inset={11}>
        <input aria-label="命令" />
        <DropIcon />
      </SelectBox>
    </CommandZone>
    <IconRow>
      <IconButton aria-label="收起"><LeftIcon /></IconButton>
      <IconButton aria-label="保存"><SaveIcon /></IconButton>
      <Divider />
      <IconButton aria-label="返回"><BackIcon /></IconButton>
      <IconButton aria-label="退出"><ExitIcon /></IconButton>
      <IconButton aria-label="取消"><CancelIcon /></IconButton>
      <Divider />
      <IconButton aria-label="打印"><PrintIcon /></IconButton>
      <IconButton aria-label="查找"><FindIcon /></IconButton>
      <IconButton aria-label="继续查找"><FindIcon off more /></IconButton>
      <Divider />
      <IconButton aria-label="第一页"><PageMoveIcon up down /></IconButton>
      <IconButton aria-label="上一页"><PageMoveIcon up /></IconButton>
      <IconButton aria-label="下一页"><PageMoveIcon down /></IconButton>
      <IconButton aria-label="最后一页"><PageMoveIcon up down /></IconButton>
      <Divider />
      <IconButton aria-label="新建会话"><SessionIcon /></IconButton>
      <IconButton aria-label="快捷方式"><SessionIcon shortcut /></IconButton>
      <Divider />
      <IconButton aria-label="帮助"><HelpIcon /></IconButton>
      <IconButton aria-label="布局"><LayoutIcon /></IconButton>
    </IconRow>
  </SystemBar>
);

const AppToolbar = () => (
  <AppBar>
    <AppButton>凭证概览打开</AppButton>
    <Divider $tall={18} $color="#8f8e80" />
    <AppIconButton aria-label="新建"><NewIcon /></AppIconButton>
    <AppIconButton aria-label="其他凭证"><OtherDocIcon /></AppIconButton>
    <AppButton>暂存</AppButton>
    <AppIconButton aria-label="关联"><RelationIcon /></AppIconButton>
    <Divider $tall={18} $color="#8f8e80" />
    <AppIconButton aria-label="检查"><CheckDocIcon /></AppIconButton>
    <AppButton $icon><PreviewIcon />打印预览</AppButton>
    <AppButton>消息</AppButton>
    <AppIconButton aria-label="信息"><InfoIcon /></AppIconButton>
    <AppButton $icon><PersonIcon />个人设置</AppButton>
  </AppBar>
);

const ItemGrid = () => (
  <TableFrame>
    <TableBody>
      <ItemTable>
        <colgroup>
          <col style={{ width: 21 }} />
          <col style={{ width: 21 }} />
          {columns.map((c) => (
            <col key={c.key} style={{ width: c.w }} />
          ))}
        </colgroup>
        <thead>
          <tr>
            <th aria-label="选择"><SelectAllIcon /></th>
            <th>状</th>
            {columns.map((c) => (
              <th key={c.key}>{c.title}</th>
            ))}
          </tr>
        </thead>
        <tbody>
          {items.map((item, r) => {
            const last = r === items.length - 1;
            return (
              <tr key={r}>
                <td><RowHandle $plain $last={last} aria-label="选择行" /></td>
                <td><RowHandle $last={last} aria-label="状态">{r === 0 && <WarnIcon />}</RowHandle></td>
                {columns.map((c) => {
                  const cell = (
                    <Cell
                      aria-label={c.title || c.key}
                      defaultValue={item[c.key] || ""}
                      $last={last}
                      $sans={c.sans}
                      $right={c.right}
                      $off={c.off || (r === 0 && c.key === "batch")}
                      $focus={r === 0 && c.key === "date"}
                    />
                  );
                  return (
                    <td key={c.key}>
                      {r === 0 && c.key === "price" ? (
                        <HelpCell>
                          {cell}
                          <MatchButton aria-label="搜索帮助"><MatchIcon /></MatchButton>
                        </HelpCell>
                      ) : (
                        cell
                      )}
                    </td>
                  );
                })}
              </tr>
            );
          })}
        </tbody>
      </ItemTable>
      <Scroller $vertical>
        <ConfigButton aria-label="列配置"><ColumnsIcon /></ConfigButton>
        <Track $vertical><Thumb $vertical $size={16} /></Track>
        <ArrowButton aria-label="向上"><TriIcon dir="up" size={12} /></ArrowButton>
        <ArrowButton aria-label="向下"><TriIcon dir="down" size={12} /></ArrowButton>
      </Scroller>
    </TableBody>
    <Scroller>
      <ArrowButton aria-label="向左"><TriIcon dir="left" size={14} /></ArrowButton>
      <ArrowButton aria-label="向右"><TriIcon dir="right" size={14} /></ArrowButton>
      <Track><Thumb $size={30} /></Track>
      <ArrowButton aria-label="向左"><TriIcon dir="left" size={14} /></ArrowButton>
      <ArrowButton aria-label="向右"><TriIcon dir="right" size={14} /></ArrowButton>
    </Scroller>
  </TableFrame>
);

const App = () => {
  const [headerTab, setHeaderTab] = useState(7);
  const [itemTab, setItemTab] = useState(6);

  return (
    <Page>
      <GlobalStyle />
      <MenuBar>
        <WindowGlyph />
        {menus.map(([name, hotkey]) => (
          <MenuItem key={name}>
            {name}(<u>{hotkey}</u>)
          </MenuItem>
        ))}
      </MenuBar>
      <SystemToolbar />
      <TitleBar>
        <ServiceButton aria-label="服务">
          <ServicesIcon />
          <Divider $tall={14} $color="#a3a293" />
          <DropIcon />
        </ServiceButton>
        <Title>创建采购订单</Title>
      </TitleBar>
      <AppToolbar />

      <Content>
        <Row $gap={9}>
          <Pair $gap={1}>
            <CartButton aria-label="购物车"><CartIcon /></CartButton>
            <Select label="订单类型" value="NB 标准采购订单" w={167} />
            <Field aria-label="订单编号" $w={87} />
          </Pair>
          <LabeledField id="vendor" label="供应商" light value="1000000002 中国电建" w={223} useSans />
          <LabeledField id="docDate" label="凭证日期" light labelWidth={88} value="2021.11.11" w={87} />
        </Row>

        <Section>
          <CollapseButton aria-label="折叠抬头"><CollapseIcon /></CollapseButton>
          <Stack $top={2}>
            <TabStrip tabs={headerTabs} active={headerTab} onChange={setHeaderTab} />
            <Panel $pad="21px 7px 58px">
              {orgData.map(([label, code, w, text], i) => (
                <Row key={label}>
                  <LabeledField id={`org${i}`} label={label} value={code} w={w} min={167} />
                  <Value>{text}</Value>
                </Row>
              ))}
            </Panel>
          </Stack>
        </Section>

        <Section $gap={5}>
          <CollapseButton aria-label="折叠项目"><CollapseIcon /></CollapseButton>
          <ItemGrid />
          <Mark $x={93} $y={0} $w={48} $h={59} />
        </Section>

        <ItemToolbar>
          {toolGroups.map((group, i) => (
            <ButtonGroup key={i}>
              {group.map(([name, icon]) => (
                <SquareButton key={name} aria-label={name}>{icon}</SquareButton>
              ))}
            </ButtonGroup>
          ))}
          <ButtonGroup $gap={9} $push={80}>
            <TextButton $w={127}>缺省值</TextButton>
            <TextButton $w={143}>附加计划编制</TextButton>
          </ButtonGroup>
        </ItemToolbar>

        <Row $height={25}>
          <CollapseButton aria-label="折叠明细"><CollapseIcon /></CollapseButton>
          <Pair>
            <Label htmlFor="item" $w={113} $light>项目</Label>
            <Select id="item" value="1 [ 10 ] 场地设计费" w={327} />
          </Pair>
          <ButtonGroup $push={25}>
            <SquareButton aria-label="上一项"><TriIcon dir="up" /></SquareButton>
            <SquareButton aria-label="下一项"><TriIcon dir="down" /></SquareButton>
          </ButtonGroup>
        </Row>

        <Section $grow>
          <span />
          <Stack>
            <TabStrip tabs={itemTabs} active={itemTab} onChange={setItemTab} />
            <Panel $open $pad="21px 7px">
              <Row $gap={9}>
                <ButtonGroup $gap={0}>
                  <SquareButton $w={27} aria-label="多重分配"><GridIcon /></SquareButton>
                  <SquareButton $w={27} aria-label="向导"><WandIcon /></SquareButton>
                  <SquareButton $w={27} aria-label="印章"><StampIcon /></SquareButton>
                </ButtonGroup>
                <ButtonGroup $gap={9} $push={14}>
                  <LabeledSelect id="acc" label="AccAssCat" labelWidth={80} value="F 订单" w={119} />
                  <LabeledSelect id="dist" label="分配" labelWidth={104} value="单个科目设置" w={183} pad={7} off />
                  <LabeledSelect id="comp" label="公司码" labelWidth={56} value="C100 DH北京 ..." w={111} off />
                </ButtonGroup>
              </Row>
              <Row $gap={9}>
                <LabeledField id="unload" label="卸货点" w={207} />
                <LabeledField id="recipient" label="接收方" w={103} />
              </Row>
              <Row>
                <LabeledField id="gl" label="总帐科目" value="55010111" w={87} />
              </Row>
              <Row>
                <LabeledField id="co" label="成本控制域" value="FQCC" w={39} off />
              </Row>
              <Row>
                <LabeledField id="cc" label="成本中心" w={87} />
              </Row>
              <Row>
                <LabeledField id="order" label="订单" value="400000" w={103} />
              </Row>
              <Row $gap={1} $indent={328}>
                <LabeledField id="network" label="网络" w={103} />
                <Field aria-label="作业" $w={39} />
              </Row>
              <Mark $x={116} $y={59} $w={140} $h={36} />
              <Mark $x={117} $y={120} $w={187} $h={55} />
            </Panel>
          </Stack>
        </Section>
      </Content>
      <Watermark>CSDN @weixin_41912277</Watermark>
    </Page>
  );
};

export default App;
